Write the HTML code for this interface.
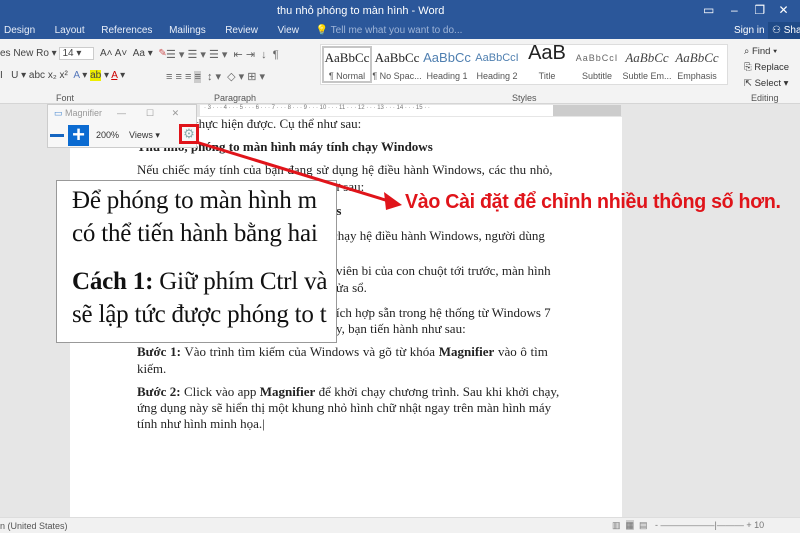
<!DOCTYPE html>
<html><head><meta charset="utf-8"><style>
*{margin:0;padding:0;box-sizing:border-box}
body{width:800px;height:533px;overflow:hidden;position:relative;background:#e6e6e6;font-family:"Liberation Sans",sans-serif;font-size:11px;color:#444}
.a{position:absolute;white-space:nowrap}
.t{font-family:"Liberation Serif",serif;font-size:13px;color:#222}
.z{font-family:"Liberation Serif",serif;font-size:25px;color:#111;letter-spacing:-0.2px}
.s{position:absolute;width:50px;text-align:center;overflow:hidden;white-space:nowrap}
.sl{position:absolute;top:71px;width:50px;text-align:center;font-size:9px;color:#555;overflow:hidden;white-space:nowrap}
</style></head><body>
<div class="a" style="left:0;top:0;width:800px;height:39px;background:#2b579a"></div>
<div class="a" style="left:277px;top:5px;color:#fff;font-size:11px">thu nhỏ phóng to màn hình - Word</div>
<div class="a" style="left:703px;top:3px;color:#fff;font-size:12px">▭&nbsp;&nbsp;&nbsp;&nbsp;&nbsp;–&nbsp;&nbsp;&nbsp;&nbsp;&nbsp;❐&nbsp;&nbsp;&nbsp;&nbsp;✕</div>
<div class="a" style="left:4px;top:25px;color:#e8eef8;font-size:10px">Design&nbsp;&nbsp;&nbsp;&nbsp;&nbsp;&nbsp;&nbsp;Layout&nbsp;&nbsp;&nbsp;&nbsp;&nbsp;&nbsp;References&nbsp;&nbsp;&nbsp;&nbsp;&nbsp;&nbsp;Mailings&nbsp;&nbsp;&nbsp;&nbsp;&nbsp;&nbsp;&nbsp;Review&nbsp;&nbsp;&nbsp;&nbsp;&nbsp;&nbsp;&nbsp;View&nbsp;&nbsp;&nbsp;&nbsp;&nbsp;&nbsp;<span style="color:#9fb5d8">💡 Tell me what you want to do...</span></div>
<div class="a" style="left:734px;top:25px;color:#fff;font-size:10px">Sign in</div>
<div class="a" style="left:768px;top:22px;width:32px;height:17px;background:#1f4a87;color:#fff;font-size:10px;padding:3px 0 0 4px">⚇ Shar</div>
<div class="a" style="left:0;top:39px;width:800px;height:65px;background:#f3f3f3;border-bottom:1px solid #d5d5d5"></div>
<div class="a" style="left:0;top:48px;font-size:10px">es New Ro ▾ <span style="border:1px solid #ccc;padding:0 12px 0 2px;background:#fff">14 ▾</span>&nbsp;&nbsp;A˄ A˅ &nbsp;Aa ▾ &nbsp;<span style="color:#c55">✎</span></div>
<div class="a" style="left:0;top:70px;font-size:10px">I&nbsp;&nbsp;&nbsp;U ▾ abc x₂ x² &nbsp;<span style="color:#57b">A</span> ▾ <span style="background:#ee0">ab</span> ▾ <span style="color:#c00;text-decoration:underline">A</span> ▾</div>
<div class="a" style="left:166px;top:48px;font-size:11px;color:#666">☰ ▾ ☰ ▾ ☰ ▾ &nbsp;⇤ ⇥ &nbsp;↓ &nbsp;¶</div>
<div class="a" style="left:166px;top:70px;font-size:11px;color:#666">≡ ≡ ≡ <span style="background:#ccc">≡</span> &nbsp;↕ ▾ &nbsp;◇ ▾ ⊞ ▾</div>
<div class="a" style="left:56px;top:93px;font-size:9px;color:#555">Font</div>
<div class="a" style="left:214px;top:93px;font-size:9px;color:#555">Paragraph</div>
<div class="a" style="left:512px;top:93px;font-size:9px;color:#555">Styles</div>
<div class="a" style="left:751px;top:93px;font-size:9px;color:#555">Editing</div>
<div class="a" style="left:320px;top:44px;width:408px;height:41px;background:#fff;border:1px solid #ddd"></div>
<div class="a" style="left:322px;top:46px;width:50px;height:37px;border:2px solid #c6c6c6"></div>
<div class="s t" style="left:322px;top:50px;font-size:13px">AaBbCc</div>
<div class="s t" style="left:372px;top:50px;font-size:13px">AaBbCc</div>
<div class="s" style="left:422px;top:50px;font-size:13px;color:#4f7fb0">AaBbCc</div>
<div class="s" style="left:472px;top:52px;font-size:11px;color:#4f7fb0">AaBbCcI</div>
<div class="s" style="left:522px;top:42px;font-size:20px;color:#222">AaB</div>
<div class="s" style="left:572px;top:53px;font-size:9px;color:#666;letter-spacing:1px">AaBbCcI</div>
<div class="s t" style="left:622px;top:50px;font-style:italic;color:#444">AaBbCc</div>
<div class="s t" style="left:672px;top:50px;font-style:italic;color:#444">AaBbCc</div>
<div class="sl" style="left:322px">¶ Normal</div>
<div class="sl" style="left:372px">¶ No Spac...</div>
<div class="sl" style="left:422px">Heading 1</div>
<div class="sl" style="left:472px">Heading 2</div>
<div class="sl" style="left:522px">Title</div>
<div class="sl" style="left:572px">Subtitle</div>
<div class="sl" style="left:622px">Subtle Em...</div>
<div class="sl" style="left:672px">Emphasis</div>
<div class="a" style="left:744px;top:44px;font-size:9.5px;color:#333;line-height:16px">⌕ Find ▾<br>⎘ Replace<br>⇱ Select ▾</div>
<div class="a" style="left:200px;top:105px;width:420px;height:11px;background:#fff;font-size:6px;color:#777;padding-left:4px">· 3 · · · 4 · · · 5 · · · 6 · · · 7 · · · 8 · · · 9 · · · 10 · · · 11 · · · 12 · · · 13 · · · 14 · · · 15 · ·</div>
<div class="a" style="left:553px;top:105px;width:68px;height:11px;background:#ccc"></div>
<div class="a" style="left:70px;top:117px;width:552px;height:400px;background:#fff"></div>
<div class="t a" style="left:195px;top:116px">thực hiện được. Cụ thể như sau:</div>
<div class="t a" style="left:137px;top:139px;font-weight:bold">Thu nhỏ, phóng to màn hình máy tính chạy Windows</div>
<div class="t a" style="left:137px;top:162px;word-spacing:0.4px">Nếu chiếc máy tính của bạn đang sử dụng hệ điều hành Windows, các thu nhỏ,</div>
<div class="t a" style="left:320px;top:179px">như sau:</div>
<div class="t a" style="left:327px;top:203px;font-weight:bold">ws</div>
<div class="t a" style="left:332px;top:228px">chạy hệ điều hành Windows, người dùng</div>
<div class="t a" style="left:336px;top:263px">viên bi của con chuột tới trước, màn hình</div>
<div class="t a" style="left:336px;top:280px">ửa sổ.</div>
<div class="t a" style="left:336px;top:305px">ích hợp sẵn trong hệ thống từ Windows 7</div>
<div class="t a" style="left:336px;top:321px">y, bạn tiến hành như sau:</div>
<div class="t a" style="left:137px;top:344px;word-spacing:0.4px"><b>Bước 1:</b> Vào trình tìm kiếm của Windows và gõ từ khóa <b>Magnifier</b> vào ô tìm</div>
<div class="t a" style="left:137px;top:361px">kiếm.</div>
<div class="t a" style="left:137px;top:384px;word-spacing:0.1px"><b>Bước 2:</b> Click vào app <b>Magnifier</b> để khởi chạy chương trình. Sau khi khởi chạy,</div>
<div class="t a" style="left:137px;top:400px">ứng dụng này sẽ hiển thị một khung nhỏ hình chữ nhật ngay trên màn hình máy</div>
<div class="t a" style="left:137px;top:416px">tính như hình minh họa.|</div>
<div class="a" style="left:56px;top:180px;width:281px;height:163px;background:#fff;border:1px solid #999;overflow:hidden">
<div class="z a" style="left:15px;top:6px">Để phóng to màn hình m</div>
<div class="z a" style="left:15px;top:39px">có thể tiến hành bằng hai</div>
<div class="z a" style="left:15px;top:87px"><b>Cách 1:</b> Giữ phím Ctrl và</div>
<div class="z a" style="left:15px;top:120px">sẽ lập tức được phóng to t</div>
</div>
<div class="a" style="left:47px;top:104px;width:150px;height:44px;background:#f7f7f7;border:1px solid #ccc"></div>
<div class="a" style="left:54px;top:108px;font-size:9px;color:#999"><span style="color:#4a8ad0">▭</span> Magnifier&nbsp;&nbsp;&nbsp;&nbsp;&nbsp;&nbsp;—&nbsp;&nbsp;&nbsp;&nbsp;&nbsp;&nbsp;&nbsp;&nbsp;☐&nbsp;&nbsp;&nbsp;&nbsp;&nbsp;&nbsp;&nbsp;✕</div>
<div class="a" style="left:50px;top:134px;width:14px;height:3px;background:#1565c0"></div>
<div class="a" style="left:68px;top:125px;width:21px;height:21px;background:#0b6bd1;color:#fff;font-size:22px;line-height:20px;text-align:center;font-weight:bold">+</div>
<div class="a" style="left:96px;top:130px;font-size:9px;color:#333">200%&nbsp;&nbsp;&nbsp;&nbsp;Views ▾</div>
<div class="a" style="left:179px;top:124px;width:20px;height:20px;border:3px solid #e0141a;color:#8aa;font-size:13px;line-height:14px;text-align:center">⚙</div>
<svg class="a" style="left:0;top:0" width="800" height="533"><line x1="196" y1="142" x2="392" y2="202" stroke="#e0141a" stroke-width="3"/><polygon points="402,205 384,192 386,210" fill="#e0141a"/></svg>
<div class="a" style="left:405px;top:191px;font-size:20px;font-weight:bold;color:#e0141a;letter-spacing:-0.3px;transform:scaleX(0.98);transform-origin:left">Vào Cài đặt để chỉnh nhiều thông số hơn.</div>
<div class="a" style="left:0;top:517px;width:800px;height:16px;background:#f1f1f1;border-top:1px solid #ddd;font-size:9px;color:#555;padding:3px 0 0 0">n (United States)</div>
<div class="a" style="left:612px;top:520px;font-size:9px;color:#777">▥ &nbsp;<span style="background:#ccc">▦</span>&nbsp; ▤&nbsp;&nbsp; - ——————|——— + 10</div>
</body></html>
